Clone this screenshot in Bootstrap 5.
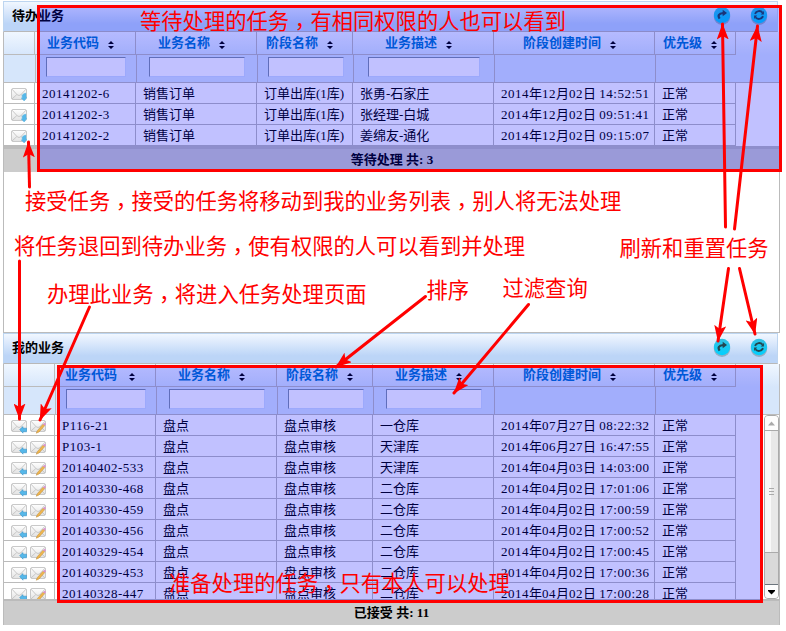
<!DOCTYPE html>
<html lang="zh-CN">
<head>
<meta charset="utf-8">
<title>待办业务</title>
<link rel="stylesheet" href="https://cdn.jsdelivr.net/npm/bootstrap@5.3.0/dist/css/bootstrap.min.css">
<style>
body{width:786px;height:631px;overflow:hidden;background:#fff;color:#000;font:13px/20px "Liberation Serif","Noto Sans CJK SC",serif}
.board{padding:1px 6px 0 3px;height:631px}
.titlebar{height:31px;width:775px;padding:0 9px 2px 8px;border:1px solid #bdd5f0;border-bottom-color:#b8b8b8;background:linear-gradient(#f1f7ff,#bcd5f7 75%);font-weight:700}
.round-btn{width:18px;height:20px;margin-top:1px}
.frame{border:1px solid #bbb;border-top:0;width:777px}
.frame.upper{height:301px}
.frame.lower{height:261px}
.line{display:grid}
.upper .line{grid-template-columns:31px 101px 121px 96px 141px 161px 81px}
.lower .line{grid-template-columns:51px 101px 121px 96px 121px 161px 81px}
.line>div{border-right:1px solid #bbb;overflow:hidden;white-space:nowrap}
.hd{height:23px;background:linear-gradient(#f0f7ff,#d6e6fb)}
.hd>div{border-bottom:1px solid #bbb;color:#0075cc;font-weight:700;display:flex;align-items:center;gap:9px;padding-bottom:1px}
.hd svg{margin-top:4px}
.hd svg.far{margin-left:3px}
.filt{height:28px;background:#d6e6fb;border-bottom:1px solid #bbb}
.filt>div{border-right:0;border-left:1px solid #bbb;padding-top:2px}
.filt>div:first-child{border-left:0}
.filt input{display:block;height:20px;padding:0;border-radius:0;border:1px solid #cfe0fb;border-top-color:#7f92a6;border-left-color:#7f92a6;background:#fff}
.o8{padding-left:8px}.o9{padding-left:9px}.o10{padding-left:10px}.o12{padding-left:12px}.o14{padding-left:14px}.o22{padding-left:22px}.o29{padding-left:29px}.o32{padding-left:32px}
.w76{width:76px}.w80{width:80px}.w96{width:96px}.w112{width:112px}
.rec{height:21px}
.rec>div{border-bottom:1px solid #bbb;padding-left:7px;line-height:22px;height:21px}
.rec .digits{letter-spacing:.5px}
.rec .tools{display:flex;align-items:center;gap:3px;padding-top:3px}
.foot{background:#ccc;border-top:3px solid #bcbcbc;font-weight:700;line-height:22px;padding-left:1px}
.upper .foot{height:26px}
.lower .foot{height:26px;border-top:2px solid #bbb;line-height:24px;padding:0;letter-spacing:.04px}
.scroller{height:184px;overflow:hidden}
.sbar{width:15px;height:184px;border:1px solid #aaa;border-radius:4px;background:#d9d9d9;overflow:hidden}
.sbtn{height:14px;background:#fdfdfd}
.thumb{height:123px;border:solid #aaa;border-width:1px 0;background:linear-gradient(90deg,#f8f8f8 50%,#e8e8e8 50%)}
.track{height:31px}
.marks{position:absolute;left:0;top:0;pointer-events:none}
.marks text{font:400 21.3px "Noto Sans CJK SC",sans-serif;fill:#f00}
.marks .cm{font-family:"Noto Sans CJK TC",sans-serif;baseline-shift:-5px}
</style>
<script src="https://cdn.jsdelivr.net/npm/bootstrap@5.3.0/dist/js/bootstrap.bundle.min.js"></script>
</head>
<body>
<svg width="0" height="0" class="position-absolute">
<defs>
<linearGradient id="env" x1="0" y1="0" x2="0" y2="1"><stop offset="0" stop-color="#fff"/><stop offset="1" stop-color="#e2e2e2"/></linearGradient>
<linearGradient id="cy" x1="0" y1="0" x2="0" y2="1"><stop offset="0" stop-color="#35c0e0"/><stop offset="1" stop-color="#00d0ff"/></linearGradient>
<symbol id="sort" viewBox="0 0 6 8"><path d="M0 3L3 0L6 3ZM0 5L3 8L6 5Z" fill="#000"/></symbol>
<symbol id="mail" viewBox="0 0 16 14"><rect x=".5" y=".5" width="15" height="11" rx="1.5" fill="url(#env)" stroke="#c9c9c9"/><path d="M1 1.2L6.2 6.8Q8 8.2 9.8 6.8L15 1.2M1 11L5.8 6.6M15 11L10.2 6.6" fill="none" stroke="#c2c2c2" stroke-width=".9"/></symbol>
<symbol id="take" viewBox="0 0 16 14"><use href="#mail" width="16" height="14"/><path d="M11.2 7.2Q12.6 4.8 15 5.2V9.2H15.9L13.2 13L10.2 10H11.2Z" fill="#55b8ea" stroke="#5fb4de" stroke-width=".5"/></symbol>
<symbol id="back" viewBox="0 0 16 14"><use href="#mail" width="16" height="14"/><path d="M8.6 9.5L12 6.6V8.2H15.7V11.8H12V13.2Z" fill="#55b8ea" stroke="#368fc3" stroke-width=".5"/></symbol>
<symbol id="edit" viewBox="0 0 16 14"><use href="#mail" width="16" height="14"/><path d="M6.2 13.2L7.3 10.7L13 4.2L14.8 5.6L9 12Z" fill="#f0b64d" stroke="#b98734" stroke-width=".5"/><path d="M13 4.2L14.2 3Q16.2 3.2 15.8 4.6L14.8 5.6Z" fill="#dd91cf"/></symbol>
<symbol id="disc" viewBox="0 0 18 20"><circle cx="9" cy="10.7" r="8.2" fill="#7898a8" opacity=".65"/><circle cx="9" cy="9" r="8.2" fill="url(#cy)"/></symbol>
<symbol id="redo" viewBox="0 0 18 20"><use href="#disc" width="18" height="20"/><path d="M6.6 12.7Q3.4 7.6 10.3 7.2" fill="none" stroke="#23464f" stroke-width="2.2"/><path d="M9.7 3.8L14 7L9.7 10.3Z" fill="#23464f"/></symbol>
<symbol id="sync" viewBox="0 0 18 20"><use href="#disc" width="18" height="20"/><path d="M5 7.8A4.4 4.4 0 0 1 12.6 6.8M13 10.2A4.4 4.4 0 0 1 5.4 11.2" fill="none" stroke="#23464f" stroke-width="1.9"/><path d="M13.9 5V8.4H10.8ZM4.1 13V9.6H7.2Z" fill="#23464f"/></symbol>
<marker id="tip" viewBox="0 0 16 12" refX="15.5" refY="6" markerWidth="16" markerHeight="12" markerUnits="userSpaceOnUse" orient="auto"><path d="M16 6L0 0L3.5 6L0 12Z" fill="#f00"/></marker>
</defs>
</svg>

<main class="board">
  <section>
    <header class="titlebar d-flex align-items-center"><span>待办业务</span>
      <span class="ms-auto d-flex" style="gap:19px"><svg class="round-btn"><use href="#redo"/></svg><svg class="round-btn"><use href="#sync"/></svg></span></header>
    <div class="frame upper">
      <div class="line hd"><div></div><div class="o12">业务代码<svg width="6" height="8"><use href="#sort"/></svg></div><div class="o22">业务名称<svg width="6" height="8"><use href="#sort"/></svg></div><div class="o9">阶段名称<svg width="6" height="8"><use href="#sort"/></svg></div><div class="o32">业务描述<svg width="6" height="8"><use href="#sort"/></svg></div><div class="o29">阶段创建时间<svg width="6" height="8"><use href="#sort"/></svg></div><div class="o8">优先级<svg width="6" height="8"><use href="#sort"/></svg></div></div>
      <div class="line filt"><div></div><div class="o10"><input class="w80" aria-label="业务代码"></div><div class="o12"><input class="w96" aria-label="业务名称"></div><div class="o10"><input class="w76" aria-label="阶段名称"></div><div class="o14"><input class="w112" aria-label="业务描述"></div><div></div><div></div></div>
      <div id="pending"></div>
      <div class="foot text-center">等待处理 共: 3</div>
    </div>
  </section>
  <section>
    <header class="titlebar d-flex align-items-center"><span>我的业务</span>
      <span class="ms-auto d-flex" style="gap:19px"><svg class="round-btn"><use href="#redo"/></svg><svg class="round-btn"><use href="#sync"/></svg></span></header>
    <div class="frame lower">
      <div class="line hd"><div></div><div class="o10">业务代码<svg width="6" height="8" class="far"><use href="#sort"/></svg></div><div class="o22">业务名称<svg width="6" height="8"><use href="#sort"/></svg></div><div class="o9">阶段名称<svg width="6" height="8"><use href="#sort"/></svg></div><div class="o22">业务描述<svg width="6" height="8"><use href="#sort"/></svg></div><div class="o29">阶段创建时间<svg width="6" height="8"><use href="#sort"/></svg></div><div class="o8">优先级<svg width="6" height="8"><use href="#sort"/></svg></div></div>
      <div class="line filt"><div></div><div class="o10"><input class="w80" aria-label="业务代码"></div><div class="o12"><input class="w96" aria-label="业务名称"></div><div class="o10"><input class="w76" aria-label="阶段名称"></div><div class="o12"><input class="w96" aria-label="业务描述"></div><div></div><div></div></div>
      <div class="scroller d-flex">
        <div id="mine" class="flex-grow-1"></div>
        <div class="sbar flex-shrink-0">
          <div class="sbtn"><svg class="d-block" width="13" height="14"><path d="M3 9.5L6.5 5.5L10 9.5Z" fill="#aaa"/></svg></div>
          <div class="thumb d-flex align-items-center justify-content-center"><svg width="5" height="7"><path d="M0 .5H5M0 3.5H5M0 6.5H5" stroke="#aaa"/></svg></div>
          <div class="track"></div>
          <div class="sbtn border-top border-secondary"><svg class="d-block" width="13" height="13"><path d="M3 5H10V6L6.5 9.5L3 6Z" fill="#000"/></svg></div>
        </div>
      </div>
      <div class="foot text-center">已接受 共: 11</div>
    </div>
  </section>
</main>

<svg class="marks" width="786" height="631">
<g fill="#00f" fill-opacity=".243" stroke="#f00" stroke-width="3"><rect x="38.5" y="6.5" width="742" height="164"/><rect x="58.5" y="366.5" width="703" height="235"/></g>
<g stroke="#f00" stroke-width="3" stroke-linecap="round">
<line x1="29.5" y1="187" x2="28.5" y2="142" marker-end="url(#tip)"/>
<line x1="19.5" y1="261" x2="19.5" y2="419" marker-end="url(#tip)"/>
<line x1="89.5" y1="307" x2="40" y2="420" marker-end="url(#tip)"/>
<line x1="425.5" y1="296.5" x2="336" y2="367" marker-end="url(#tip)"/>
<line x1="528.5" y1="304.5" x2="454" y2="393" marker-end="url(#tip)"/>
<line x1="725.5" y1="227" x2="722.5" y2="24" marker-end="url(#tip)"/>
<line x1="734.5" y1="229" x2="757.5" y2="26" marker-end="url(#tip)"/>
<line x1="728.5" y1="268.5" x2="718" y2="341" marker-end="url(#tip)"/>
<line x1="739.5" y1="268.5" x2="755" y2="334" marker-end="url(#tip)"/>
</g>
<text x="140" y="28.5">等待处理的任务<tspan class="cm" lang="zh-Hant">，</tspan>有相同权限的人也可以看到</text>
<text x="25" y="208.5">接受任务<tspan class="cm" lang="zh-Hant">，</tspan>接受的任务将移动到我的业务列表<tspan class="cm" lang="zh-Hant">，</tspan>别人将无法处理</text>
<text x="14" y="253.5">将任务退回到待办业务<tspan class="cm" lang="zh-Hant">，</tspan>使有权限的人可以看到并处理</text>
<text x="47" y="301.5">办理此业务<tspan class="cm" lang="zh-Hant">，</tspan>将进入任务处理页面</text>
<text x="426.5" y="297.5">排序</text>
<text x="502.5" y="295.5">过滤查询</text>
<text x="619.5" y="255.5">刷新和重置任务</text>
<text x="169" y="590.5">准备处理的任务<tspan class="cm" lang="zh-Hant">，</tspan>只有本人可以处理</text>
</svg>

<script>
const icon = id => `<svg width="16" height="14"><use href="#${id}"/></svg>`;
const digits = s => s.replace(/[P\d:-]{2,}/g, '<span class="digits">$&</span>');
const fill = (id, tools, rows) => {
  document.getElementById(id).innerHTML = rows.map(r =>
    `<div class="line rec"><div class="tools">${tools.map(icon).join('')}</div>` +
    r.concat('正常').map(c => `<div>${digits(c)}</div>`).join('') + '</div>').join('');
};
fill('pending', ['take'], [
  ['20141202-6', '销售订单', '订单出库(1库)', '张勇-石家庄', '2014年12月02日 14:52:51'],
  ['20141202-3', '销售订单', '订单出库(1库)', '张经理-白城', '2014年12月02日 09:51:41'],
  ['20141202-2', '销售订单', '订单出库(1库)', '姜绵友-通化', '2014年12月02日 09:15:07']
]);
fill('mine', ['back', 'edit'], [
  ['P116-21', '盘点', '盘点审核', '一仓库', '2014年07月27日 08:22:32'],
  ['P103-1', '盘点', '盘点审核', '天津库', '2014年06月27日 16:47:55'],
  ['20140402-533', '盘点', '盘点审核', '天津库', '2014年04月03日 14:03:00'],
  ['20140330-468', '盘点', '盘点审核', '二仓库', '2014年04月02日 17:01:06'],
  ['20140330-459', '盘点', '盘点审核', '二仓库', '2014年04月02日 17:00:59'],
  ['20140330-456', '盘点', '盘点审核', '二仓库', '2014年04月02日 17:00:52'],
  ['20140329-454', '盘点', '盘点审核', '二仓库', '2014年04月02日 17:00:45'],
  ['20140329-453', '盘点', '盘点审核', '二仓库', '2014年04月02日 17:00:36'],
  ['20140328-447', '盘点', '盘点审核', '二仓库', '2014年04月02日 17:00:28']
]);
</script>
</body>
</html>
